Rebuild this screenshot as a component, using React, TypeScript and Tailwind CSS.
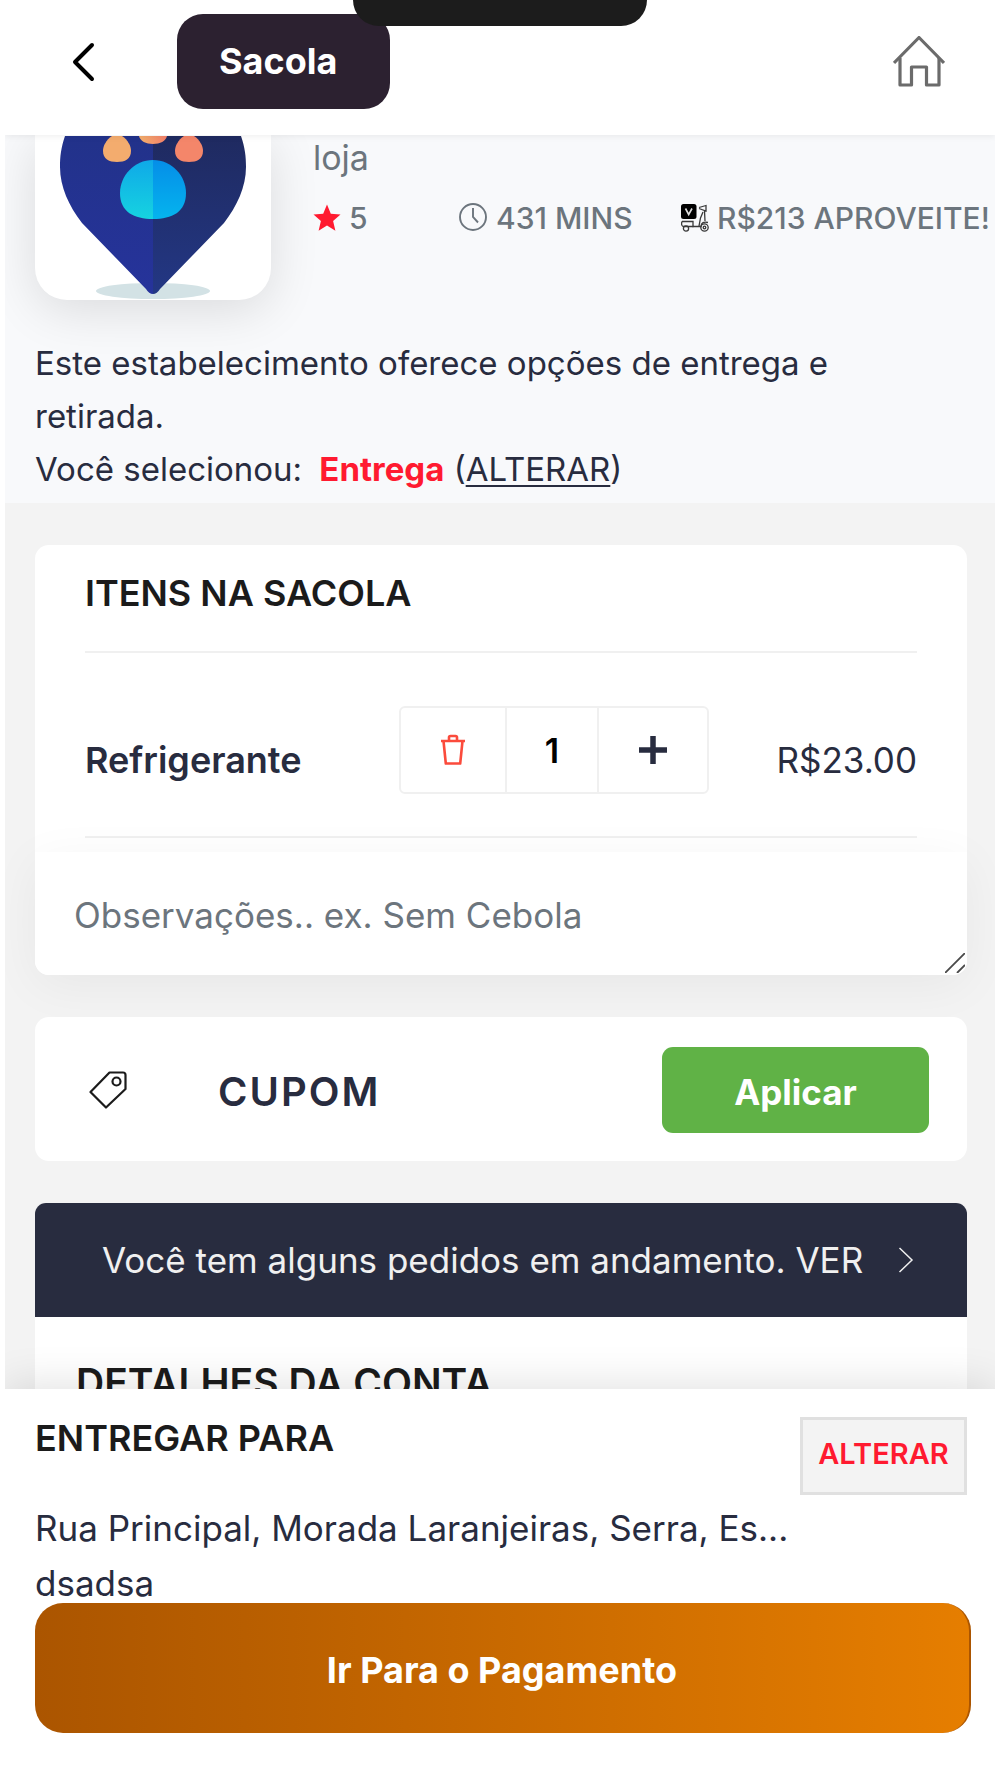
import React from "react";

function BackIcon() {
  return (
    <svg className="h-10 w-6" viewBox="0 0 24 40" fill="none" stroke="#000" strokeWidth="4" strokeLinecap="round" strokeLinejoin="round">
      <path d="M20 3 3 20l17 17" />
    </svg>
  );
}

function HomeIcon() {
  return (
    <svg className="h-[52px] w-[52px]" viewBox="0 0 52 52" fill="none" stroke="#6b6b6b" strokeWidth="3.200" strokeLinejoin="round">
      <path d="M1 27 26 1.500 51 27" />
      <path d="M7 22v27h11.500V31h15v18H46V22" />
    </svg>
  );
}

function StoreLogo() {
  return (
    <svg className="block w-full" viewBox="0 0 236 164" role="img" aria-label="Logo da loja">
      <defs>
        <linearGradient id="pinLeft" x1="0" y1="0" x2="0" y2="1">
          <stop offset="0" stopColor="#22328a" />
          <stop offset="1" stopColor="#26339b" />
        </linearGradient>
        <linearGradient id="pinRight" x1="0" y1="0" x2="0" y2="1">
          <stop offset="0" stopColor="#1f2a60" />
          <stop offset="1" stopColor="#233784" />
        </linearGradient>
        <linearGradient id="toe" x1="0" y1="0" x2="1" y2="0">
          <stop offset="0" stopColor="#f3b06d" />
          <stop offset="1" stopColor="#f4806a" />
        </linearGradient>
        <linearGradient id="padLeft" x1="0" y1="0" x2="0" y2="1">
          <stop offset="0" stopColor="#0fa9e8" />
          <stop offset="1" stopColor="#16d3e0" />
        </linearGradient>
        <linearGradient id="padRight" x1="0" y1="0" x2="0" y2="1">
          <stop offset="0" stopColor="#058ee8" />
          <stop offset="1" stopColor="#05b4ee" />
        </linearGradient>
      </defs>
      <ellipse cx="118" cy="155" rx="57" ry="8" fill="#d3e2e5" />
      <path d="M30 0C26 12 25 20 25 31c0 20 9 39 22 56l64 66q3 5 7 5V0Z" fill="url(#pinLeft)" />
      <path d="M206 0c4 12 5 20 5 31 0 20-9 39-22 56l-64 66q-3 5-7 5V0Z" fill="url(#pinRight)" />
      <path d="M77 0h10c6 4 9 10 9 15 0 8-6 11-14 11s-14-3-14-11c0-5 3-11 9-15Z" fill="#f3ac6e" />
      <path d="M149 0h10c6 4 9 10 9 15 0 8-6 11-14 11s-14-3-14-11c0-5 3-11 9-15Z" fill="#f4866a" />
      <path d="M104 0h28c-1 5-7 8-14 8s-13-3-14-8Z" fill="url(#toe)" />
      <path d="M118 24c-19 0-33 16-33 33 0 19 14 26 33 26Z" fill="url(#padLeft)" />
      <path d="M118 24c19 0 33 16 33 33 0 19-14 26-33 26Z" fill="url(#padRight)" />
    </svg>
  );
}

function StarIcon() {
  return (
    <svg className="h-7 w-7" viewBox="0 0 28 28" fill="#ff1a30">
      <path d="M14 0.500l3.800 9.200 9.700.800-7.400 6.400 2.300 9.800L14 21.500l-8.400 5.200 2.300-9.800L.5 10.500l9.700-.8Z" />
    </svg>
  );
}

function ClockIcon() {
  return (
    <svg className="h-[30px] w-[30px]" viewBox="0 0 30 30" fill="none" stroke="#6c757d" strokeWidth="1.900">
      <circle cx="15" cy="14" r="13" />
      <path d="M15 5V14l5 5.500" />
    </svg>
  );
}

function ScooterIcon() {
  return (
    <svg className="h-7 w-7" viewBox="0 0 28 28" fill="none" stroke="#3a3a3a" strokeWidth="1.300">
      <rect x="0" y="0" width="15.500" height="15" rx="2.500" fill="#000" stroke="none" />
      <path d="M4.500 4.500 7.700 10.500 11 4.500" stroke="#ddd" strokeWidth="1.600" />
      <path d="M18 3.500 25 1.500v5.500l-7-2.500M23.500 7 24 17M22 8l-2.500 6-1.500 8M1 17.500h11v5h8c0-4 3-5 7-4" />
      <path d="M1 17.500c-1 3 0 5 1.500 5h10" />
      <circle cx="5" cy="24.500" r="2.600" />
      <circle cx="23.500" cy="23.500" r="3.700" />
      <circle cx="23.500" cy="23.500" r="1.300" />
    </svg>
  );
}

function TrashIcon() {
  return (
    <svg className="h-8 w-[26px]" viewBox="0 0 26 32" fill="none" stroke="#fb4b3c" strokeWidth="2.600" strokeLinejoin="round">
      <path d="M1 7h24M3.500 7l2.300 22.500h14.400L22.500 7M9 7V3.500q0-1.500 1.500-1.500h5q1.500 0 1.500 1.500V7" />
    </svg>
  );
}

function PlusIcon() {
  return (
    <svg className="h-7 w-7" viewBox="0 0 28 28" fill="none" stroke="#282c3f" strokeWidth="5.500">
      <path d="M14 0v28M0 14h28" />
    </svg>
  );
}

function TagIcon() {
  return (
    <svg className="h-[38px] w-[38px]" viewBox="0 0 38 38" fill="none" stroke="#1b1b1b" strokeWidth="2.200" strokeLinejoin="round">
      <path d="M20.500 1.500H34q2.500 0 2.500 2.500V18L17 36.500 1.500 21Z" />
      <circle cx="27.500" cy="10.500" r="4" />
    </svg>
  );
}

function ChevronIcon() {
  return (
    <svg className="h-[26px] w-4" viewBox="0 0 16 26" fill="none" stroke="#f0f0f0" strokeWidth="1.500">
      <path d="M1.500 1 14 13 1.500 25" />
    </svg>
  );
}

function ResizeGrip() {
  return (
    <svg className="pointer-events-none absolute right-0.5 bottom-0.5 h-5 w-5" viewBox="0 0 20 20" stroke="#4a4a4a" strokeWidth="1.800">
      <path d="M0 20 20 0M12 20l8-8" />
    </svg>
  );
}

export default function App() {
  return (
    <div className="bg-white px-[5px] font-['Inter',sans-serif] text-[#282c3f]">
      <div className="flex h-screen flex-col overflow-hidden">
        <header className="relative z-10 flex shrink-0 items-center bg-white pt-3.5 pb-[26px] pr-[50px] pl-[67px] shadow-[0_2px_6px_rgba(0,0,0,0.06)]">
          <button type="button" aria-label="Voltar">
            <BackIcon />
          </button>
          <h1 className="ml-[81px] rounded-[26px] bg-[#2c2130] py-5 pr-[53px] pl-[42px] text-4xl leading-[55px] font-bold text-white">Sacola</h1>
          <a href="#inicio" aria-label="Início" className="ml-auto">
            <HomeIcon />
          </a>
          <div className="absolute top-0 left-1/2 h-[26px] w-[294px] -translate-x-1/2 rounded-b-[36px] bg-[#1c1c1c]" />
        </header>

        <main className="relative min-h-0 flex-1 overflow-hidden bg-[#f3f3f3]">
          <section className="bg-[#f8f9fb] pb-[7px]">
            <div className="flex pl-[30px]">
              <div className="w-[236px] shrink-0 overflow-hidden rounded-b-[32px] bg-white pt-px shadow-[0_10px_50px_rgba(0,0,0,0.12)]">
                <StoreLogo />
              </div>
              <div className="min-w-0 flex-1 pl-[42px] text-[#6c757d]">
                <p className="text-[34px] leading-[46px]">loja</p>
                <div className="mt-[13px] flex items-center text-[30px] leading-[48px] font-medium whitespace-nowrap">
                  <span className="flex w-[145px] items-center gap-2"><StarIcon /> 5</span>
                  <span className="flex w-[223px] items-center gap-2"><ClockIcon /> 431 MINS</span>
                  <span className="flex items-center gap-2"><ScooterIcon /> R$213 APROVEITE!</span>
                </div>
              </div>
            </div>
            <div className="relative px-[30px] pt-[37px] text-[33px] leading-[53px]">
              <p className="max-w-[840px]">Este estabelecimento oferece opções de entrega e retirada.</p>
              <p>
                Você selecionou: <strong className="ml-2 font-bold text-[#ff1a30]">Entrega</strong> (
                <a href="#alterar" className="underline decoration-2 underline-offset-4">ALTERAR</a>)
              </p>
            </div>
          </section>

          <div className="flex flex-col gap-[42px] pt-[42px] pr-7 pl-[30px]">
            <section className="rounded-[14px] bg-white">
              <div className="mx-[50px]">
                <h2 className="border-b-2 border-[#f0f0f0] pt-[23px] pb-[33px] text-4xl leading-[50px] font-semibold text-[#1b1b1b]">ITENS NA SACOLA</h2>
                <div className="flex items-start justify-between border-b-2 border-[#f0f0f0] pt-[53px] pb-[42px]">
                  <span className="w-[314px] pt-7 text-4xl leading-[52px] font-semibold">Refrigerante</span>
                  <div className="flex h-[88px] w-[310px] divide-x-2 divide-[#f0f0f0] rounded-md border-2 border-[#f0f0f0]">
                    <button type="button" aria-label="Remover item" className="flex w-[106px] items-center justify-center">
                      <TrashIcon />
                    </button>
                    <span className="flex flex-1 items-center justify-center text-[34px] font-semibold text-black">1</span>
                    <button type="button" aria-label="Adicionar item" className="flex w-[108px] items-center justify-center">
                      <PlusIcon />
                    </button>
                  </div>
                  <span className="ml-auto pt-7 text-[35px] leading-[52px]">R$23.00</span>
                </div>
              </div>
              <div className="relative mt-[14px] rounded-b-[14px] shadow-[0_10px_50px_rgba(0,0,0,0.05)]">
                <textarea
                  aria-label="Observações"
                  placeholder="Observações.. ex. Sem Cebola"
                  className="block h-[123px] w-full resize-none rounded-b-[14px] bg-white px-[39px] pt-[36px] text-[35px] leading-[54px] outline-none placeholder:text-[#6c757d]"
                />
                <ResizeGrip />
              </div>
            </section>

            <form className="relative flex items-center rounded-[14px] bg-white pt-[30px] pr-[38px] pb-7 pl-[54px]">
              <TagIcon />
              <input
                type="text"
                aria-label="Cupom"
                placeholder="CUPOM"
                className="ml-[91px] min-w-0 flex-1 bg-transparent pt-1 text-[40px] font-semibold tracking-wider outline-none placeholder:text-[#282c3f]"
              />
              <button type="button" className="h-[86px] w-[267px] rounded-[11px] bg-[#60b246] pt-1 text-[35px] font-bold text-white">Aplicar</button>
            </form>

            <section className="rounded-t-[11px] bg-white">
              <a href="#pedidos" className="flex items-center justify-between rounded-t-[11px] bg-[#282c3f] py-[31px] pr-[53px] pl-[67px] text-[35px] leading-[52px] text-[#f0f0f0]">
                Você tem alguns pedidos em andamento. VER
                <ChevronIcon />
              </a>
              <h2 className="px-[41px] pt-10 text-[39px] leading-[52px] font-semibold text-[#1b1b1b]">DETALHES DA CONTA</h2>
            </section>
          </div>
        </main>

        <footer className="relative z-10 shrink-0 bg-white pr-6 pb-[45px] pl-[30px] shadow-[0_-4px_40px_rgba(0,0,0,0.12)]">
          <div className="flex items-start justify-between pt-7 pr-1">
            <h2 className="text-4xl leading-[42px] font-semibold text-[#1b1b1b]">ENTREGAR PARA</h2>
            <button type="button" className="h-[78px] w-[167px] border-[3px] border-[#e0e0e0] bg-[#f3f3f3] pb-1 text-[29px] font-semibold text-[#ff1a30]">ALTERAR</button>
          </div>
          <address className="mt-1.5 text-[35px] leading-[55px] not-italic">
            <p>Rua Principal, Morada Laranjeiras, Serra, Es...</p>
            <p>dsadsa</p>
          </address>
          <button type="button" className="-mt-2 block h-[130px] w-full rounded-[28px] border-r-2 border-[#ab5500] bg-linear-to-r from-[#ab5500] to-[#e67e00] pt-1 text-4xl font-bold text-white">
            Ir Para o Pagamento
          </button>
        </footer>
      </div>
    </div>
  );
}
